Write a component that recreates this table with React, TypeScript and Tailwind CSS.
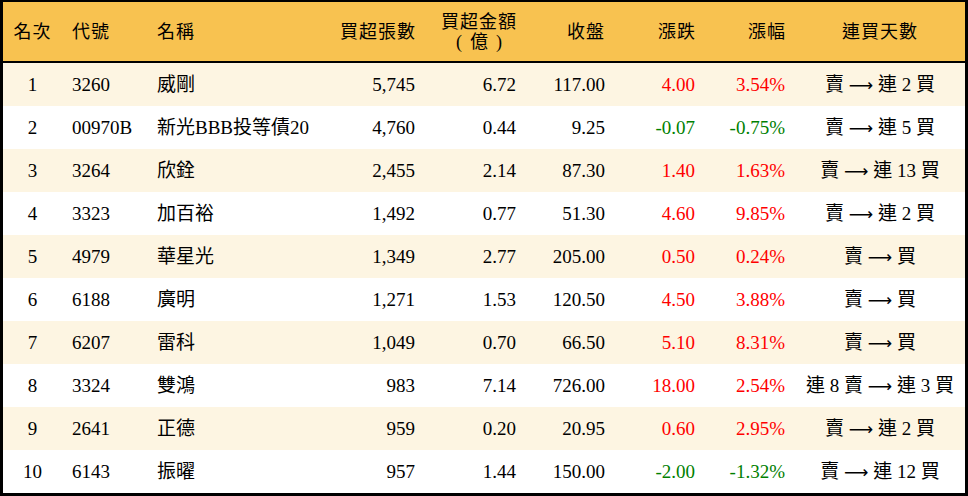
import React from "react";

type Row = {
  rank: number;
  code: string;
  name: string;
  lots: string;
  amount: string;
  close: string;
  change: string;
  pct: string;
  from: string;
  to: string;
};

const rows: Row[] = [
  { rank: 1, code: "3260", name: "威剛", lots: "5,745", amount: "6.72", close: "117.00", change: "4.00", pct: "3.54%", from: "賣", to: "連 2 買" },
  { rank: 2, code: "00970B", name: "新光BBB投等債20", lots: "4,760", amount: "0.44", close: "9.25", change: "-0.07", pct: "-0.75%", from: "賣", to: "連 5 買" },
  { rank: 3, code: "3264", name: "欣銓", lots: "2,455", amount: "2.14", close: "87.30", change: "1.40", pct: "1.63%", from: "賣", to: "連 13 買" },
  { rank: 4, code: "3323", name: "加百裕", lots: "1,492", amount: "0.77", close: "51.30", change: "4.60", pct: "9.85%", from: "賣", to: "連 2 買" },
  { rank: 5, code: "4979", name: "華星光", lots: "1,349", amount: "2.77", close: "205.00", change: "0.50", pct: "0.24%", from: "賣", to: "買" },
  { rank: 6, code: "6188", name: "廣明", lots: "1,271", amount: "1.53", close: "120.50", change: "4.50", pct: "3.88%", from: "賣", to: "買" },
  { rank: 7, code: "6207", name: "雷科", lots: "1,049", amount: "0.70", close: "66.50", change: "5.10", pct: "8.31%", from: "賣", to: "買" },
  { rank: 8, code: "3324", name: "雙鴻", lots: "983", amount: "7.14", close: "726.00", change: "18.00", pct: "2.54%", from: "連 8 賣", to: "連 3 買" },
  { rank: 9, code: "2641", name: "正德", lots: "959", amount: "0.20", close: "20.95", change: "0.60", pct: "2.95%", from: "賣", to: "連 2 買" },
  { rank: 10, code: "6143", name: "振曜", lots: "957", amount: "1.44", close: "150.00", change: "-2.00", pct: "-1.32%", from: "賣", to: "連 12 買" },
];

const cols = "grid grid-cols-[59px_85px_153px_125px_101px_89px_90px_90px_170px]";

export default function App() {
  return (
    <div
      className="w-[968px] h-[496px] border-x-[3px] border-t-2 border-b-[3px] border-black bg-white text-black text-[19px] leading-none"
      style={{ fontFamily: "'Liberation Serif', 'Noto Sans CJK TC', serif" }}
    >
      <div className={`${cols} h-[61px] bg-[#f8c250] border-b-2 border-black items-center text-[18px] tracking-[1px]`}>
        <div className="text-center">名次</div>
        <div className="pl-[10px]">代號</div>
        <div className="pl-[10px]">名稱</div>
        <div className="text-right pr-[9px]">買超張數</div>
        <div className="flex justify-end pr-[9px]">
          <div className="text-center leading-[20px]">
            <div>買超金額</div>
            <div className="tracking-[8px] pl-[8px]">(億)</div>
          </div>
        </div>
        <div className="text-right pr-[10px]">收盤</div>
        <div className="text-right pr-[9px]">漲跌</div>
        <div className="text-right pr-[9px]">漲幅</div>
        <div className="text-center">連買天數</div>
      </div>
      {rows.map((r, i) => {
        const up = !r.change.startsWith("-");
        const tone = up ? "text-[#ff0000]" : "text-[#008000]";
        return (
          <div
            key={r.rank}
            className={`${cols} h-[43px] items-center ${i % 2 === 0 ? "bg-[#fdf5e2]" : "bg-white"}`}
          >
            <div className="text-center">{r.rank}</div>
            <div className="pl-[10px]">{r.code}</div>
            <div className="pl-[10px] whitespace-nowrap">{r.name}</div>
            <div className="text-right pr-[10px]">{r.lots}</div>
            <div className="text-right pr-[10px]">{r.amount}</div>
            <div className="text-right pr-[10px]">{r.close}</div>
            <div className={`text-right pr-[10px] ${tone}`}>{r.change}</div>
            <div className={`text-right pr-[10px] ${tone}`}>{r.pct}</div>
            <div className="text-center whitespace-nowrap">
              {r.from}{" "}
              <span style={{ fontFamily: "'DejaVu Sans', sans-serif" }} className="text-[17px]">
                ⟶
              </span>{" "}
              {r.to}
            </div>
          </div>
        );
      })}
    </div>
  );
}
